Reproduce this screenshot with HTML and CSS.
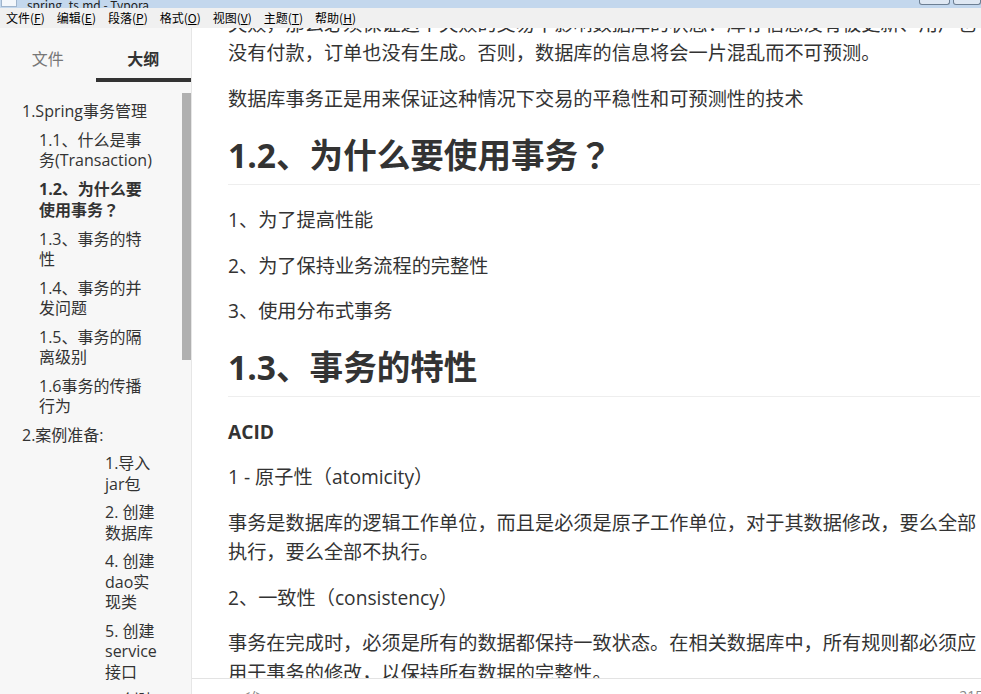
FILE: index.html
```html
<!DOCTYPE html>
<html>
  <head>
    <meta charset="utf-8" />
    <title>spring_ts.md - Typora</title>
    <link rel="stylesheet" href="styles.css">
  </head>
  <body>
    <div class="window">
      <div class="titlebar">
        <span class="app-icon"></span>
        <span class="title">spring_ts.md - Typora</span>
        <div class="win-btns"><span class="min"></span><span class="max"></span></div>
      </div>
      <nav class="menubar">
        <span class="menu">文件(<u>F</u>)</span>
        <span class="menu">编辑(<u>E</u>)</span>
        <span class="menu">段落(<u>P</u>)</span>
        <span class="menu">格式(<u>O</u>)</span>
        <span class="menu">视图(<u>V</u>)</span>
        <span class="menu">主题(<u>T</u>)</span>
        <span class="menu">帮助(<u>H</u>)</span>
      </nav>
      <div class="main">
        <aside class="sidebar">
          <div class="tabs">
            <div class="tab">文件</div>
            <div class="tab active">大纲</div>
          </div>
          <div class="outline-wrap">
            <ul class="outline">
              <li class="lv1">1.Spring事务管理</li>
              <li class="lv2">1.1、什么是事务(Transaction)</li>
              <li class="lv2 current">1.2、为什么要使用事务<span class="punct">？</span></li>
              <li class="lv2">1.3、事务的特性</li>
              <li class="lv2">1.4、事务的并发问题</li>
              <li class="lv2">1.5、事务的隔离级别</li>
              <li class="lv2">1.6事务的传播行为</li>
              <li class="lv1">2.案例准备:</li>
              <li class="lv3">1.导入jar包</li>
              <li class="lv3">2. 创建数据库</li>
              <li class="lv3">4. 创建dao实现类</li>
              <li class="lv3">5. 创建service接口</li>
              <li class="lv3">6. 创建service实现类</li>
            </ul>
            <div class="scrollbar"><div class="thumb"></div></div>
          </div>
        </aside>
        <section class="editor">
          <div class="doc-view">
            <article class="doc">
              <p>比如，在网上购物时，一次交易包括生成订单、扣减库存、用户付款等操作，如果该交易失败，那么必须保证这个失败的交易不影响数据库的状态：库存信息没有被更新、用户也没有付款，订单也没有生成。否则，数据库的信息将会一片混乱而不可预测。</p>
              <p>数据库事务正是用来保证这种情况下交易的平稳性和可预测性的技术</p>
              <h1>1.2、为什么要使用事务<span class="punct">？</span></h1>
              <p>1、为了提高性能</p>
              <p>2、为了保持业务流程的完整性</p>
              <p>3、使用分布式事务</p>
              <h1>1.3、事务的特性</h1>
              <p><strong>ACID</strong></p>
              <p>1 - 原子性<span class="punct">（</span>atomicity<span class="punct">）</span></p>
              <p>事务是数据库的逻辑工作单位，而且是必须是原子工作单位，对于其数据修改，要么全部执行，要么全部不执行。</p>
              <p>2、一致性<span class="punct">（</span>consistency<span class="punct">）</span></p>
              <p>事务在完成时，必须是所有的数据都保持一致状态。在相关数据库中，所有规则都必须应用于事务的修改，以保持所有数据的完整性。</p>
              <p>3、隔离性<span class="punct">（</span>isolation<span class="punct">）</span></p>
            </article>
          </div>
          <footer class="statusbar">
            <div class="status-left">
              <span class="sb-icon">‹</span>
              <span class="sb-icon">&lt;/&gt;</span>
            </div>
            <span class="word-count">2156 词</span>
          </footer>
        </section>
      </div>
    </div>
  </body>
</html>
```

FILE: styles.css
```css
html, body {
    margin: 0;
    overflow: hidden;
    font-family: "Open Sans", "Noto Sans CJK SC", sans-serif;
    color: #333;
}
.window {
    width: 981px;
    height: 694px;
    display: flex;
    flex-direction: column;
    overflow: hidden;
    background: #fff;
}

/* title bar, mostly scrolled off the top of the shot */
.titlebar {
    height: 8px;
    flex-shrink: 0;
    display: flex;
    align-items: flex-end;
    background: #c3d7ed;
    overflow: hidden;
}
.app-icon {
    width: 14px;
    height: 6px;
    margin: 0 10px 0 1px;
    align-self: flex-start;
    background: #f4f7fb;
    border: 1px solid #9fb4cc;
    border-top: none;
    flex-shrink: 0;
}
.title {
    font-family: "Noto Sans CJK SC", sans-serif;
    font-size: 12px;
    line-height: 16px;
    margin-bottom: -5px;
    color: #222;
}
.win-btns {
    margin-left: auto;
    display: flex;
    align-self: flex-start;
    gap: 3px;
}
.win-btns span {
    height: 4px;
    border: 1px solid #6d7f93;
    border-top: none;
    border-radius: 0 0 3px 3px;
    background: #dfe8f3;
}
.win-btns .min { width: 29px; }
.win-btns .max { width: 26px; }

/* menu bar */
.menubar {
    height: 20px;
    flex-shrink: 0;
    display: flex;
    align-items: center;
    background: #f0f0f0;
    font-family: "Noto Sans CJK SC", sans-serif;
    font-size: 12px;
    color: #000;
}
.menu {
    padding: 0 6px;
    line-height: 20px;
}
.menu u {
    text-underline-offset: 1px;
}

.main {
    flex: 1;
    display: flex;
    min-height: 0;
}

/* sidebar */
.sidebar {
    width: 191px;
    flex-shrink: 0;
    background: #f7f7f7;
    border-right: 1px solid #e6e6e6;
    display: flex;
    flex-direction: column;
}
.tabs {
    display: grid;
    grid-template-columns: 1fr 1fr;
}
.tab {
    padding-top: 12px;
    height: 38px;
    line-height: 38px;
    text-align: center;
    font-size: 16px;
    color: #777;
    border-bottom: 4px solid transparent;
}
.tab.active {
    color: #333;
    font-weight: bold;
    border-bottom-color: #333;
}
.outline-wrap {
    flex: 1;
    display: flex;
    min-height: 0;
    overflow: hidden;
}
.outline {
    flex: 1;
    list-style: none;
    margin: 0;
    padding: 15px 25px 0 22px;
    font-size: 16px;
    line-height: 20.5px;
    color: #333;
}
.outline li {
    padding: 4px 0;
}
.outline .lv2 {
    padding-left: 17px;
}
.outline .lv3 {
    padding-left: 83px;
}
.outline .current {
    font-weight: bold;
}
.scrollbar {
    width: 9px;
    flex-shrink: 0;
}
.scrollbar .thumb {
    margin-top: 11px;
    height: 267px;
    background: #b0b0b0;
}

/* full-width punctuation sits centred in its cell, as in the original font */
.punct {
    font-family: "Noto Sans CJK TC", sans-serif;
}

/* editor */
.editor {
    flex: 1;
    min-width: 0;
    display: flex;
    flex-direction: column;
}
.doc-view {
    flex: 1;
    min-height: 0;
    overflow: hidden;
    padding-left: 36px;
}
.doc {
    width: 752px;
    margin-top: -49px;
    font-size: 19.2px;
    line-height: 29.5px;
}
.doc p {
    margin: 16px 0;
}
.doc p:first-child {
    margin-top: 0;
}
.doc h1 {
    font-size: 33.6px;
    line-height: 40px;
    font-weight: bold;
    margin: 21px 0 20px;
    padding-bottom: 9px;
    border-bottom: 1px solid #eee;
    color: #333;
}
.statusbar {
    height: 16px;
    flex-shrink: 0;
    box-sizing: border-box;
    border-top: 1px solid #e3e3e3;
    display: flex;
    justify-content: space-between;
    overflow: hidden;
    font-size: 14px;
    color: #888;
}
.status-left {
    display: flex;
    gap: 34px;
    padding-left: 12px;
}
.sb-icon, .word-count {
    padding-top: 9px;
    line-height: 16px;
}
.word-count {
    margin-right: -28px;
}
```
